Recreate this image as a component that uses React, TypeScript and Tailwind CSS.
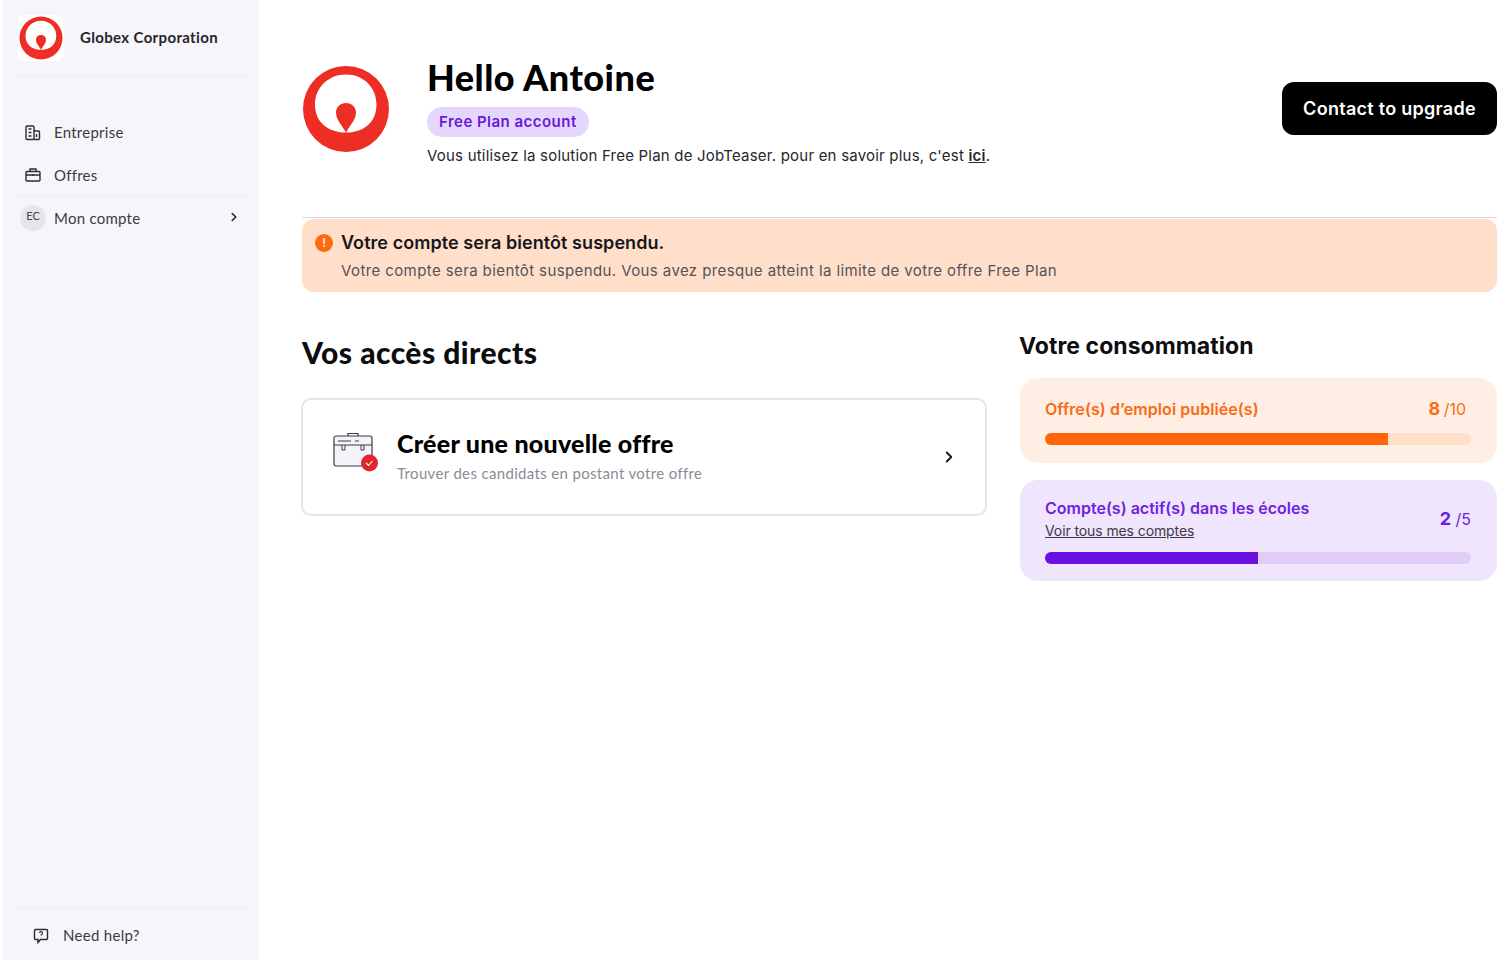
import React from 'react';
import { ChevronRight } from 'lucide-react';

const Logo = ({ className }: { className: string }) => (
  <svg viewBox="0 0 88 88" className={className}>
    <path
      fillRule="evenodd"
      fill="#ee2e24"
      d="M44 1a43 43 0 1 0 0 86a43 43 0 1 0 0-86ZM44 9.500C62 9.500 74.500 23 74.500 39.500C74.500 55 65 65.500 48 67.500L40 67.500C23 65.500 13 55 13 39.500C13 23 26 9.500 44 9.500Z"
    />
    <path fill="#ee2e24" d="M44 38c5.500 0 10 4 10 9.500c0 7-5.500 12-10 20c-4.500-8-10-13-10-20c0-5.500 4.500-9.500 10-9.500Z" />
  </svg>
);

const BuildingIcon = () => (
  <svg viewBox="0 0 16 16" className="h-4 w-4" fill="none" stroke="#2b2b33" strokeWidth="1.400">
    <rect x="1" y="1" width="8" height="13.500" rx="1" />
    <path d="M9 6h4.500a1 1 0 0 1 1 1v6.500a1 1 0 0 1-1 1H9" />
    <path d="M3.500 4h3M3.500 7.500h3M3.500 11h3M11.500 9v3" />
  </svg>
);

const BagIcon = () => (
  <svg viewBox="0 0 16 16" className="h-4 w-4" fill="none" stroke="#2b2b33" strokeWidth="1.400">
    <rect x="1" y="4.500" width="14" height="9.500" rx="1" />
    <path d="M5 4.500V2h6v2.500M1 8h14M8 7v2" />
  </svg>
);

const HelpIcon = () => (
  <svg viewBox="0 0 16 16" className="h-4 w-4" fill="none" stroke="#2b2b33" strokeWidth="1.400">
    <path d="M2.500 1.500h11a1 1 0 0 1 1 1v8a1 1 0 0 1-1 1H7.500L5 14.500v-3H2.500a1 1 0 0 1-1-1v-8a1 1 0 0 1 1-1Z" />
    <path d="M6.500 5a1.500 1.500 0 1 1 2 1.500c-.4.200-.5.500-.5 1M8 9v.3" strokeWidth="1.200" />
  </svg>
);

const CaseIcon = () => (
  <svg viewBox="0 0 46 42" className="-mt-[10px] h-[42px] w-[46px]" fill="none">
    <rect x="1" y="5" width="38" height="30" rx="2" fill="#f4f4f8" stroke="#3a3a42" strokeWidth="1.200" />
    <path d="M15 5V2.500h10V5" stroke="#3a3a42" strokeWidth="1.200" />
    <path d="M1 14h38M5 10h13M22 10h4" stroke="#3a3a42" strokeWidth="1" />
    <path d="M9 14v5h3v-5M28 14v5h3v-5" stroke="#3a3a42" strokeWidth="1" />
    <circle cx="36.500" cy="32" r="8.500" fill="#e0262c" />
    <path d="M33 32l2.500 2.500l4-4.500" stroke="#fff" strokeWidth="1.100" />
  </svg>
);

const Meter = ({ value, track, fill }: { value: string; track: string; fill: string }) => (
  <div className={`h-[12px] w-full overflow-hidden rounded-full ${track}`}>
    <div className={`h-full ${fill}`} style={{ width: value }} />
  </div>
);

export default function App() {
  return (
    <div className="flex h-screen w-full bg-white font-['Lato',sans-serif] text-[#17171c]">
      {/* Sidebar */}
      <aside className="ml-[3px] flex h-full w-[256px] shrink-0 flex-col bg-[#f6f6fa] px-[9px]">
        <div className="flex h-[76px] items-center gap-[16px] border-b border-[#ebebf1] px-[6px]">
          <div className="h-[46px] w-[46px] rounded-md bg-white p-[1px]">
            <Logo className="h-[44px] w-[44px]" />
          </div>
          <span className="text-[15px] font-bold tracking-[0.35px] text-[#25252b]">Globex Corporation</span>
        </div>
        <nav className="mt-[35px] flex flex-col text-[15px] tracking-[0.25px] text-[#3b3b44]">
          <a className="flex h-[43px] items-center gap-[13px] px-[13px]"><BuildingIcon /> Entreprise</a>
          <a className="flex h-[41px] items-center gap-[13px] px-[13px] pt-[1px]"><BagIcon /> Offres</a>
          <a className="flex h-[46px] items-center gap-[8px] border-t border-[#ebebf1] pb-[1px] pl-[8px] pr-[9px]">
            <span className="-mt-[1px] flex h-[26px] w-[26px] items-center justify-center rounded-full bg-[#e5e5ec] pb-[2px] text-[11px] tracking-normal text-[#44444c]">EC</span>
            Mon compte
            <ChevronRight className="ml-auto -mt-[2px] h-[14px] w-[14px] text-[#25252b]" strokeWidth={2.800} />
          </a>
        </nav>
        <div className="mt-auto flex h-[52px] items-center gap-[14px] border-t border-[#ebebf1] px-[21px] pt-[2px] text-[15px] tracking-[0.3px] text-[#3b3b44]">
          <HelpIcon /> Need help?
        </div>
      </aside>

      {/* Main */}
      <main className="min-w-0 flex-1 pl-[43px] pr-[4px] font-['Inter',sans-serif]">
        <header className="flex h-[218px] items-start border-b border-[#d9d9e2] pt-[59px]">
          <Logo className="mt-[6px] h-[88px] w-[88px]" />
          <div className="ml-[37px] flex flex-col items-start">
            <h1 className="font-['Lato',sans-serif] text-[36px] font-black leading-[36px] tracking-[0.5px] text-black">Hello Antoine</h1>
            <span className="mt-[12px] rounded-full bg-[#e4d7fb] px-[12px] py-[5px] text-[15px] font-semibold leading-[20px] tracking-[0.47px] text-[#6a17dc]">Free Plan account</span>
            <p className="mt-[8px] text-[15px] leading-[22px] tracking-[0.21px] text-[#26262c]">
              Vous utilisez la solution Free Plan de JobTeaser. pour en savoir plus, c'est <a className="font-semibold underline">ici</a>.
            </p>
          </div>
          <button className="ml-auto mt-[23px] h-[53px] w-[215px] rounded-[12px] bg-black text-[18px] font-semibold tracking-[0.28px] text-white">Contact to upgrade</button>
        </header>

        <section className="mt-[1px] h-[73px] rounded-[12px] bg-[#ffdfca] px-[13px] pt-[12px]">
          <div className="flex items-center gap-[8px]">
            <span className="flex h-[18px] w-[18px] items-center justify-center rounded-full bg-[#fe6a0e] text-[12px] font-bold text-[#ffdfca]">!</span>
            <strong className="text-[18px] font-semibold leading-[24px] tracking-[0.06px] text-[#17171c]">Votre compte sera bientôt suspendu.</strong>
          </div>
          <p className="ml-[26px] mt-[5px] text-[15px] leading-[22px] tracking-[0.4px] text-[#55535a]">Votre compte sera bientôt suspendu. Vous avez presque atteint la limite de votre offre Free Plan</p>
        </section>

        <div className="flex gap-[32px]">
          <div className="w-[686px] shrink-0">
            <h2 className="mt-[41px] font-['Lato',sans-serif] text-[30px] font-black leading-[38px] tracking-[0.45px] text-[#0d0d10]">Vos accès directs</h2>
            <a className="mt-[27px] -ml-[1px] flex h-[118px] w-[686px] items-center rounded-[10px] border-2 border-[#e4e4ea] pl-[30px] pr-[27px]">
              <CaseIcon />
              <div className="ml-[18px] -mt-[5px] flex flex-col">
                <h3 className="font-['Lato',sans-serif] text-[25px] font-black leading-[32px] tracking-[0.25px] text-black">Créer une nouvelle offre</h3>
                <p className="mt-[4px] font-['Lato',sans-serif] text-[15px] leading-[20px] tracking-[0.34px] text-[#8b8b97]">Trouver des candidats en postant votre offre</p>
              </div>
              <ChevronRight className="ml-auto h-[18px] w-[18px] text-[#17171c]" strokeWidth={2.500} />
            </a>
          </div>

          <div className="min-w-0 flex-1">
            <h2 className="-ml-[1px] mt-[39px] text-[23px] font-bold leading-[30px] tracking-[0.05px] text-[#0d0d10]">Votre consommation</h2>
            <div className="mt-[17px] h-[85px] rounded-[18px] bg-[#ffeee4] pl-[25px] pr-[26px] pt-[19px]">
              <div className="flex items-center justify-between pr-[5px]">
                <span className="text-[16px] font-semibold leading-[24px] tracking-[0.07px] text-[#fb6a14]">Offre(s) d’emploi publiée(s)</span>
                <span className="text-[16px] leading-[24px] text-[#fb6a14]"><b className="mr-[-1px] text-[18px]">8</b> /10</span>
              </div>
              <div className="mt-[12px]"><Meter value="80.500%" track="bg-[#ffdfca]" fill="bg-[#ff650a]" /></div>
            </div>
            <div className="mt-[17px] h-[101px] rounded-[18px] bg-[#efe5fd] pl-[25px] pr-[26px] pt-[16px]">
              <div className="flex items-center justify-between">
                <div className="flex flex-col">
                  <span className="text-[16px] font-semibold leading-[24px] text-[#6f1fe0]">Compte(s) actif(s) dans les écoles</span>
                  <a className="text-[14px] leading-[22px] tracking-[-0.1px] text-[#3e3a48] underline">Voir tous mes comptes</a>
                </div>
                <span className="-mt-[2px] text-[16px] text-[#6f1fe0]"><b className="text-[18px]">2</b> /5</span>
              </div>
              <div className="mt-[10px]"><Meter value="50%" track="bg-[#e0cef8]" fill="bg-[#6a10e0]" /></div>
            </div>
          </div>
        </div>
      </main>
    </div>
  );
}
